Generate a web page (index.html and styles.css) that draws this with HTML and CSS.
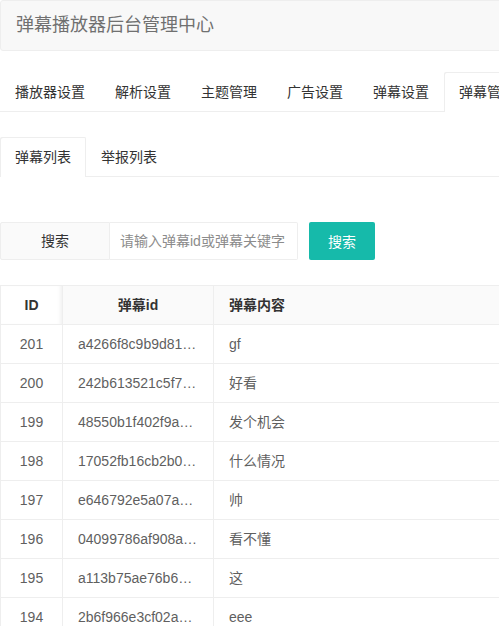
FILE: index.html
```html
<!DOCTYPE html>
<html lang="zh-CN">
<head>
<meta charset="utf-8">
<title>弹幕播放器后台管理中心</title>
<link rel="stylesheet" href="styles.css">
</head>
<body>
<div class="page">
  <div class="header">弹幕播放器后台管理中心</div>

  <ul class="tabs main-tabs">
    <li>播放器设置</li>
    <li>解析设置</li>
    <li>主题管理</li>
    <li>广告设置</li>
    <li>弹幕设置</li>
    <li class="active">弹幕管理</li>
    <li>其他设置</li>
  </ul>

  <ul class="tabs sub-tabs">
    <li class="active">弹幕列表</li>
    <li>举报列表</li>
  </ul>

  <form class="search">
    <label class="search-label">搜索</label>
    <input class="search-input" type="text" placeholder="请输入弹幕id或弹幕关键字">
    <button class="search-btn" type="button">搜索</button>
  </form>

  <table class="grid">
    <thead>
      <tr><th class="c-id">ID</th><th class="c-did">弹幕id</th><th class="c-text">弹幕内容</th></tr>
    </thead>
    <tbody>
      <tr><td class="c-id">201</td><td>a4266f8c9b9d81…</td><td>gf</td></tr>
      <tr><td class="c-id">200</td><td>242b613521c5f7…</td><td>好看</td></tr>
      <tr><td class="c-id">199</td><td>48550b1f402f9a…</td><td>发个机会</td></tr>
      <tr><td class="c-id">198</td><td>17052fb16cb2b0…</td><td>什么情况</td></tr>
      <tr><td class="c-id">197</td><td>e646792e5a07a…</td><td>帅</td></tr>
      <tr><td class="c-id">196</td><td>04099786af908a…</td><td>看不懂</td></tr>
      <tr><td class="c-id">195</td><td>a113b75ae76b6…</td><td>这</td></tr>
      <tr><td class="c-id">194</td><td>2b6f966e3cf02a…</td><td>eee</td></tr>
      <tr><td class="c-id">193</td><td>9d2f01c4b7e35a…</td><td>666</td></tr>
    </tbody>
  </table>
</div>
</body>
</html>
```

FILE: styles.css
```css
html, body {
  margin: 0;
  padding: 0;
  overflow: hidden;
  background: #fff;
}

body {
  font-family: "Liberation Sans", "Noto Sans CJK SC", sans-serif;
  font-size: 14px;
  color: #333;
}

.page {
  width: 760px;
}

.header {
  height: 51px;
  box-sizing: border-box;
  line-height: 49px;
  padding-left: 15px;
  font-size: 18px;
  color: #707070;
  background: #f8f8f8;
  border: 1px solid #eee;
  border-radius: 3px;
}

.tabs {
  list-style: none;
  margin: 0;
  padding: 0;
  display: flex;
  height: 40px;
  box-sizing: border-box;
  border-bottom: 1px solid #eee;
  white-space: nowrap;
}

.tabs li {
  flex: none;
  height: 40px;
  line-height: 40px;
  padding: 0 15px;
  box-sizing: border-box;
  color: #333;
}

.tabs li.active {
  background: #fff;
  border-radius: 2px 2px 0 0;
  box-shadow: inset 1px 1px 0 #eee, inset -1px 0 0 #eee;
}

.main-tabs {
  margin-top: 21px;
}

.sub-tabs {
  margin-top: 25px;
}

.search {
  display: flex;
  margin: 45px 0 0;
  height: 38px;
}

.search-label {
  width: 110px;
  box-sizing: border-box;
  height: 38px;
  line-height: 36px;
  text-align: center;
  background: #fafafa;
  border: 1px solid #eee;
  border-radius: 2px 0 0 2px;
  color: #333;
}

.search-input {
  width: 188px;
  height: 38px;
  box-sizing: border-box;
  margin: 0;
  padding: 0 10px;
  border: 1px solid #eee;
  border-left: none;
  border-radius: 0 2px 2px 0;
  font-family: inherit;
  font-size: 14px;
  color: #333;
  outline: none;
}

.search-input::placeholder {
  color: #8c8c8c;
}

.search-btn {
  margin-left: 11px;
  width: 66px;
  height: 38px;
  border: none;
  border-radius: 2px;
  background: #16baaa;
  color: #fff;
  font-family: inherit;
  font-size: 14px;
  padding: 0;
}

.grid {
  margin-top: 25px;
  border-collapse: collapse;
  width: 760px;
  table-layout: fixed;
  color: #5f5f5f;
}

.grid th,
.grid td {
  height: 38px;
  line-height: 37px;
  padding: 1px 15px 0;
  border: 1px solid #eee;
  text-align: left;
  white-space: nowrap;
  overflow: hidden;
  box-sizing: border-box;
}

.grid th {
  background: #fafafa;
  color: #333;
  font-weight: bold;
}

.grid .c-id {
  width: 62px;
  text-align: center;
  padding: 1px 0 0;
}

.grid th.c-id {
  background: #fff;
  box-shadow: inset -4px 0 4px -3px rgba(0, 0, 0, 0.08);
}

.grid .c-did {
  width: 151px;
  text-align: center;
}

.grid td {
  font-size: 14px;
}
```
